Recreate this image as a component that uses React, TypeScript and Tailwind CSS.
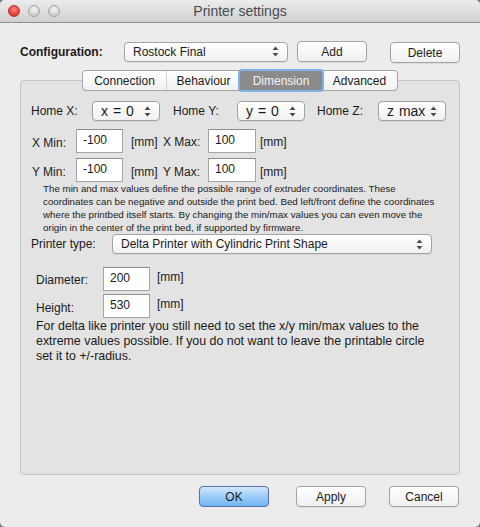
import React from "react";

const Arrows = () => (
  <svg width="7" height="11" viewBox="0 0 7 11" className="shrink-0">
    <path d="M3.5 0.5 L6.5 4 L0.5 4 Z" fill="#4a4a4a" />
    <path d="M3.5 10.5 L6.5 7 L0.5 7 Z" fill="#4a4a4a" />
  </svg>
);

function Popup({ w, text, big }: { w: string; text: string; big?: boolean }) {
  return (
    <div
      className={`${w} h-[20px] flex items-center justify-between rounded-[4px] border border-[#a3a3a3] bg-gradient-to-b from-[#ffffff] to-[#f1f1f1] shadow-[0_1px_0_rgba(0,0,0,0.06)] pl-[8px] pr-[8px] shrink-0`}
    >
      <span
        className={
          big
            ? "text-[14px] leading-none whitespace-nowrap [word-spacing:1px]"
            : "text-[12px] leading-none whitespace-nowrap"
        }
      >
        {text}
      </span>
      <Arrows />
    </div>
  );
}

function Btn({ text, primary }: { text: string; primary?: boolean }) {
  return (
    <div
      className={`w-[70px] h-[21px] flex items-center justify-center rounded-[4px] text-[12px] leading-none border ${
        primary
          ? "border-[#5b6fa8] bg-gradient-to-b from-[#d2e8fc] via-[#9ccdf6] to-[#6fb6f1]"
          : "border-[#a3a3a3] bg-gradient-to-b from-[#ffffff] to-[#f0f0f0] shadow-[0_1px_0_rgba(0,0,0,0.06)]"
      }`}
    >
      {text}
    </div>
  );
}

function Field({ w, value }: { w: string; value: string }) {
  return (
    <div
      className={`${w} h-[24px] bg-white border border-[#a5a5a5] border-t-[#8c8c8c] pl-[6px] pt-[3px] text-[12px] leading-[14px] shrink-0`}
    >
      {value}
    </div>
  );
}

export default function App() {
  return (
    <div
      className="w-[480px] h-[527px] bg-[#7a7a7a] text-[#1b1b1b]"
      style={{ fontFamily: '"Liberation Sans", Arial, sans-serif' }}
    >
      <div className="w-[480px] h-[527px] bg-[#ececec] rounded-[5px] overflow-hidden flex flex-col">
        {/* title bar */}
        <div className="h-[23px] shrink-0 relative flex items-center justify-center bg-gradient-to-b from-[#ececec] to-[#d0d0d0] border-b border-[#8e8e8e]">
          <div className="absolute left-[8px] top-[5px] flex gap-[8px]">
            <div className="w-[12px] h-[12px] rounded-full border border-[#b23a33] bg-[radial-gradient(circle_at_50%_35%,#ff8a80,#e3413a_60%,#c52a25)]" />
            <div className="w-[12px] h-[12px] rounded-full border border-[#a3a3a3] bg-[radial-gradient(circle_at_50%_35%,#f4f4f4,#d3d3d3_60%,#c2c2c2)]" />
            <div className="w-[12px] h-[12px] rounded-full border border-[#a3a3a3] bg-[radial-gradient(circle_at_50%_35%,#f4f4f4,#d3d3d3_60%,#c2c2c2)]" />
          </div>
          <span className="text-[14px] text-[#4a4a4a] leading-none">Printer settings</span>
        </div>

        {/* configuration row */}
        <div className="mt-[18px] h-[21px] flex items-center pl-[20px]">
          <div className="w-[104px] text-[12px] font-bold leading-none">Configuration:</div>
          <Popup w="w-[164px]" text="Rostock Final" />
          <div className="ml-[9px]">
            <Btn text="Add" />
          </div>
          <div className="ml-[23px] mt-[2px]">
            <Btn text="Delete" />
          </div>
        </div>

        {/* tabs */}
        <div className="mt-[8px] flex justify-center relative z-10">
          <div className="flex h-[21px] rounded-[4px] border border-[#a3a3a3] bg-gradient-to-b from-[#ffffff] to-[#f0f0f0] text-[12px] leading-none">
            <div className="w-[84px] flex items-center justify-center border-r border-[#d4d4d4]">Connection</div>
            <div className="w-[73px] flex items-center justify-center">Behaviour</div>
            <div className="w-[82px] flex items-center justify-center bg-[#8b8b8b] text-[#f4f4f4] shadow-[0_0_0_2px_#7fb0e6] rounded-[2px]">
              Dimension
            </div>
            <div className="w-[75px] flex items-center justify-center">Advanced</div>
          </div>
        </div>

        {/* panel */}
        <div className="-mt-[11px] mx-[20px] h-[395px] rounded-[4px] border border-[#c6c6c6] bg-[#e3e3e3] pt-[20px] pl-[10px] text-[12px]">
          {/* home row */}
          <div className="flex items-center h-[20px]">
            <div className="w-[61px]">Home X:</div>
            <Popup w="w-[68px]" text="x = 0" big />
            <div className="w-[77px] pl-[13px]">Home Y:</div>
            <Popup w="w-[68px]" text="y = 0" big />
            <div className="w-[73px] pl-[12px]">Home Z:</div>
            <Popup w="w-[68px]" text="z max" big />
          </div>

          {/* X row */}
          <div className="mt-[8px] flex items-center">
            <div className="w-[45px] pl-[1px] pt-[3px]">X Min:</div>
            <Field w="w-[47px]" value="-100" />
            <div className="w-[40px] pl-[8px] pt-[1px]">[mm]</div>
            <div className="w-[45px] pt-[1px]">X Max:</div>
            <Field w="w-[48px]" value="100" />
            <div className="pl-[4px] pt-[1px]">[mm]</div>
          </div>

          {/* Y row */}
          <div className="mt-[5px] flex items-center">
            <div className="w-[45px] pl-[1px] pt-[3px]">Y Min:</div>
            <Field w="w-[47px]" value="-100" />
            <div className="w-[40px] pl-[8px] pt-[3px]">[mm]</div>
            <div className="w-[45px] pt-[3px]">Y Max:</div>
            <Field w="w-[48px]" value="100" />
            <div className="pl-[4px] pt-[3px]">[mm]</div>
          </div>

          <p className="pl-[12px] text-[9.75px] leading-[13px] whitespace-nowrap">
            <span className="block">The min and max values define the possible range of extruder coordinates. These</span>
            <span className="block">coordinates can be negative and outside the print bed. Bed left/front define the coordinates</span>
            <span className="block">where the printbed itself starts. By changing the min/max values you can even move the</span>
            <span className="block">origin in the center of the print bed, if supported by firmware.</span>
          </p>

          {/* printer type */}
          <div className="flex items-center">
            <div className="w-[81px]">Printer type:</div>
            <Popup w="w-[320px]" text="Delta Printer with Cylindric Print Shape" />
          </div>

          {/* delta section */}
          <div className="pl-[5px]">
            <div className="mt-[13px] flex items-start">
              <div className="w-[67px] pt-[4px]">Diameter:</div>
              <Field w="w-[47px]" value="200" />
              <div className="pl-[7px] pt-[1px]">[mm]</div>
            </div>
            <div className="mt-[3px] flex items-start">
              <div className="w-[67px] pt-[5px]">Height:</div>
              <Field w="w-[47px]" value="530" />
              <div className="pl-[7px] pt-[1px]">[mm]</div>
            </div>
            <p className="text-[12.4px] leading-[15px] mt-[1px] whitespace-nowrap">
              <span className="block">For delta like printer you still need to set the x/y min/max values to the</span>
              <span className="block">extreme values possible. If you do not want to leave the printable circle</span>
              <span className="block">set it to +/-radius.</span>
            </p>
          </div>
        </div>

        {/* bottom buttons */}
        <div className="mt-[11px] flex justify-end pr-[21px]">
          <Btn text="OK" primary />
          <div className="ml-[27px]">
            <Btn text="Apply" />
          </div>
          <div className="ml-[23px]">
            <Btn text="Cancel" />
          </div>
        </div>
      </div>
    </div>
  );
}
